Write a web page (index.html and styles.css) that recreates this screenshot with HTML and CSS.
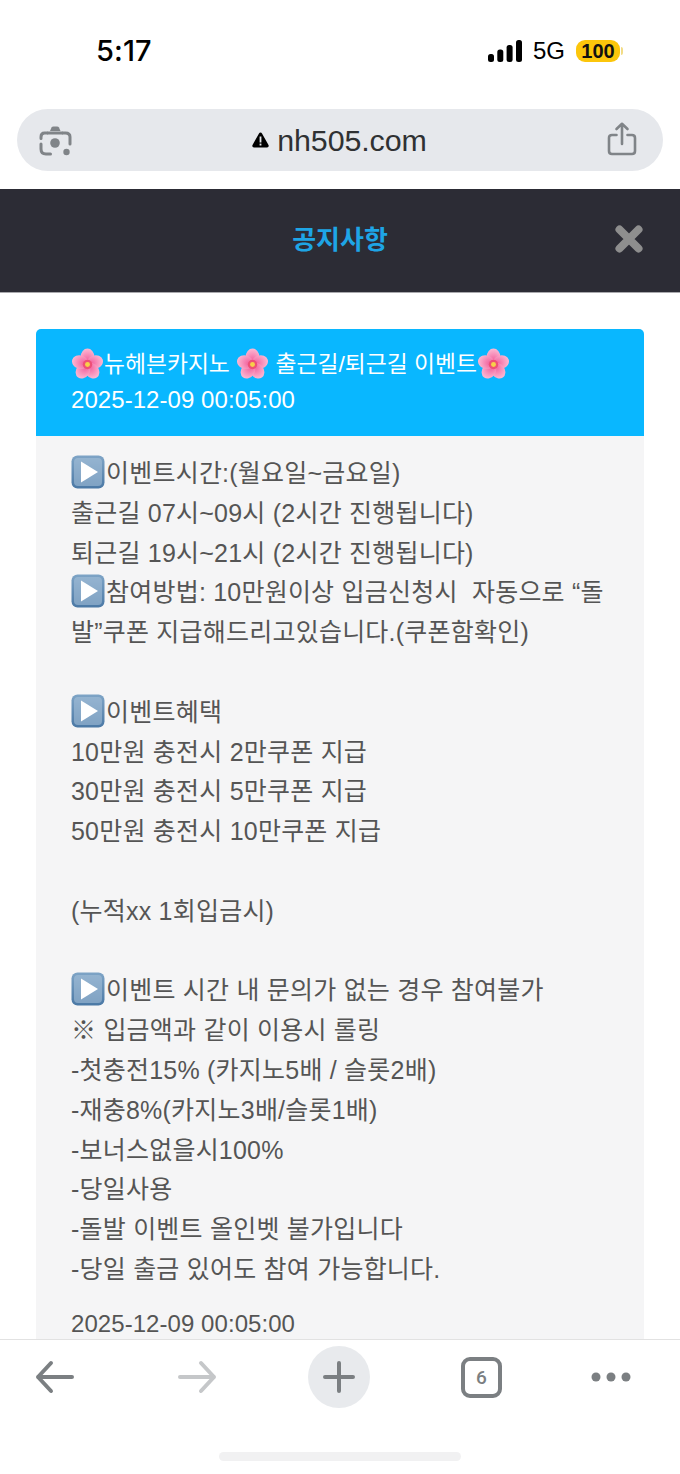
FILE: index.html
```html
<!DOCTYPE html>
<html lang="ko">
<head>
<meta charset="utf-8">
<title>공지사항</title>
<link rel="stylesheet" href="styles.css">
</head>
<body>
<svg class="defs" width="0" height="0" aria-hidden="true">
  <defs>
    <radialGradient id="petal" cx="50%" cy="78%" r="75%">
      <stop offset="0" stop-color="#f25c9a"/>
      <stop offset="1" stop-color="#fbb6d2"/>
    </radialGradient>
    <linearGradient id="blueBox" x1="0" y1="0" x2="0" y2="1">
      <stop offset="0" stop-color="#7ea4c6"/>
      <stop offset="1" stop-color="#4a78a5"/>
    </linearGradient>
    <symbol id="flower" viewBox="0 0 32 32">
      <g fill="url(#petal)">
        <ellipse cx="16" cy="8.5" rx="6.6" ry="8"/>
        <ellipse cx="16" cy="8.5" rx="6.6" ry="8" transform="rotate(72 16 16)"/>
        <ellipse cx="16" cy="8.5" rx="6.6" ry="8" transform="rotate(144 16 16)"/>
        <ellipse cx="16" cy="8.5" rx="6.6" ry="8" transform="rotate(216 16 16)"/>
        <ellipse cx="16" cy="8.5" rx="6.6" ry="8" transform="rotate(288 16 16)"/>
      </g>
      <circle cx="16" cy="16" r="4.6" fill="#ee4f76"/>
      <circle cx="16" cy="16" r="2.4" fill="#f7cf4a"/>
    </symbol>
    <symbol id="play" viewBox="0 0 34 34">
      <rect x="0.5" y="0.5" width="33" height="33" rx="6" fill="url(#blueBox)"/>
      <rect x="3" y="3" width="28" height="28" rx="4" fill="#a9c3da" opacity="0.55"/>
      <path d="M10 6.5 L27 17 L10 27.5 Z" fill="#fff"/>
    </symbol>
  </defs>
</svg>

<div class="phone">
  <header class="status">
    <span class="time">5:17</span>
    <div class="status-right">
      <svg class="signal" width="34" height="22" viewBox="0 0 34 22" aria-hidden="true">
        <rect x="0" y="14" width="6" height="8" rx="2.5"/>
        <rect x="9.3" y="9.5" width="6" height="12.5" rx="2.5"/>
        <rect x="18.6" y="5" width="6" height="17" rx="2.5"/>
        <rect x="28" y="0" width="6" height="22" rx="2.5"/>
      </svg>
      <span class="net">5G</span>
      <span class="battery">100</span>
      <span class="battery-tip"></span>
    </div>
  </header>

  <div class="url-wrap">
    <div class="url-bar">
      <svg class="lens" width="34" height="34" viewBox="0 0 34 34" fill="none" aria-hidden="true">
        <path d="M9 10 H6.5 Q3 10 3 14 V15.5 M3 21 V26 Q3 31 8 31 H12.5 M25 10 H27.5 Q32 10 32 14 V21" stroke="#808488" stroke-width="3" stroke-linecap="round"/>
        <path d="M12 8 L13.5 4.5 Q14 3.5 15.5 3.5 H19 Q20.5 3.5 21 4.5 L22.5 8 Z" fill="#808488"/>
        <path d="M9 10 H25" stroke="#808488" stroke-width="3"/>
        <circle cx="17" cy="20" r="4.8" fill="#808488"/>
        <circle cx="28.5" cy="29" r="3.2" fill="#808488"/>
      </svg>
      <div class="address">
        <svg width="17" height="16" viewBox="0 0 17 16" aria-hidden="true">
          <path d="M8.5 0.5 Q9.5 0.5 10 1.5 L16.5 13 Q17.3 15 15 15.5 H2 Q-0.3 15 0.5 13 L7 1.5 Q7.5 0.5 8.5 0.5 Z" fill="#000"/>
          <rect x="7.6" y="4.5" width="1.8" height="6" fill="#e6e8ec"/>
          <rect x="7.6" y="11.6" width="1.8" height="1.9" fill="#e6e8ec"/>
        </svg>
        <span class="domain">nh505.com</span>
      </div>
      <svg class="share" width="30" height="34" viewBox="0 0 30 34" fill="none" stroke="#808488" stroke-width="2.6" stroke-linecap="round" stroke-linejoin="round" aria-hidden="true">
        <path d="M9.5 13 H5 Q2 13 2 16 V29 Q2 32 5 32 H25 Q28 32 28 29 V16 Q28 13 25 13 H20.5"/>
        <path d="M15 22 V2 M9.5 7 L15 1.8 L20.5 7"/>
      </svg>
    </div>
  </div>

  <div class="modal-head">
    <h1 class="modal-title">공지사항</h1>
    <svg class="close" width="30" height="30" viewBox="0 0 30 30" aria-hidden="true">
      <path d="M5.5 5.5 L24.5 24.5 M24.5 5.5 L5.5 24.5" stroke="#8e8e8e" stroke-width="8" stroke-linecap="round"/>
    </svg>
  </div>

  <main class="content">
    <article class="card">
      <div class="card-head">
        <div class="card-title"><svg class="emoji flower"><use href="#flower"/></svg>뉴헤븐카지노 <svg class="emoji flower"><use href="#flower"/></svg> 출근길/퇴근길 이벤트<svg class="emoji flower"><use href="#flower"/></svg></div>
        <div class="card-date">2025-12-09 00:05:00</div>
      </div>
      <div class="card-body">
        <p class="line"><svg class="emoji play"><use href="#play"/></svg>이벤트시간:(월요일~금요일)</p>
        <p class="line">출근길 07시~09시 (2시간 진행됩니다)</p>
        <p class="line">퇴근길 19시~21시 (2시간 진행됩니다)</p>
        <p class="line"><svg class="emoji play"><use href="#play"/></svg>참여방법: 10만원이상 입금신청시&nbsp; 자동으로 “돌</p>
        <p class="line">발”쿠폰 지급해드리고있습니다.(쿠폰함확인)</p>
        <p class="line">&nbsp;</p>
        <p class="line"><svg class="emoji play"><use href="#play"/></svg>이벤트혜택</p>
        <p class="line">10만원 충전시 2만쿠폰 지급</p>
        <p class="line">30만원 충전시 5만쿠폰 지급</p>
        <p class="line">50만원 충전시 10만쿠폰 지급</p>
        <p class="line">&nbsp;</p>
        <p class="line">(누적xx 1회입금시)</p>
        <p class="line">&nbsp;</p>
        <p class="line"><svg class="emoji play"><use href="#play"/></svg>이벤트 시간 내 문의가 없는 경우 참여불가</p>
        <p class="line">※ 입금액과 같이 이용시 롤링</p>
        <p class="line">-첫충전15% (카지노5배 / 슬롯2배)</p>
        <p class="line">-재충8%(카지노3배/슬롯1배)</p>
        <p class="line">-보너스없을시100%</p>
        <p class="line">-당일사용</p>
        <p class="line">-돌발 이벤트 올인벳 불가입니다</p>
        <p class="line">-당일 출금 있어도 참여 가능합니다.</p>
        <div class="body-date">2025-12-09 00:05:00</div>
      </div>
    </article>
  </main>

  <footer class="toolbar">
    <div class="tools">
      <svg class="tool back" width="40" height="34" viewBox="0 0 40 34" fill="none" stroke="#7b7f82" stroke-width="4" stroke-linecap="round" stroke-linejoin="round" aria-hidden="true">
        <path d="M37 17 H3 M16 3 L3 17 L16 31"/>
      </svg>
      <svg class="tool forward" width="40" height="34" viewBox="0 0 40 34" fill="none" stroke="#c5c7c9" stroke-width="4" stroke-linecap="round" stroke-linejoin="round" aria-hidden="true">
        <path d="M3 17 H37 M24 3 L37 17 L24 31"/>
      </svg>
      <div class="tool plus">
        <svg width="32" height="32" viewBox="0 0 32 32" stroke="#7b7f82" stroke-width="4" stroke-linecap="round" aria-hidden="true">
          <path d="M16 2 V30 M2 16 H30"/>
        </svg>
      </div>
      <div class="tool tabs">6</div>
      <svg class="tool more" width="40" height="10" viewBox="0 0 40 10" fill="#7b7f82" aria-hidden="true">
        <circle cx="5" cy="5" r="4.5"/><circle cx="20" cy="5" r="4.5"/><circle cx="35" cy="5" r="4.5"/>
      </svg>
    </div>
    <div class="home-indicator"></div>
  </footer>
</div>
</body>
</html>
```
FILE: styles.css
```css
* { box-sizing: border-box; }
html, body { margin: 0; padding: 0; height: 100%; background: #fff; }
body {
  font-family: "Liberation Sans", "Noto Sans CJK KR", sans-serif;
  overflow: hidden;
}
.defs { position: absolute; }
.phone {
  width: 680px;
  height: 1474px;
  display: flex;
  flex-direction: column;
  overflow: hidden;
}

.status {
  height: 109px;
  flex: none;
  padding: 30px 57px 0 96px;
  display: flex;
  justify-content: space-between;
  align-items: flex-start;
}
.time {
  font-family: Inter, "Liberation Sans", sans-serif;
  font-size: 29px;
  font-weight: 500;
  line-height: 42px;
  color: #000;
  letter-spacing: 0.1px;
}
.status-right { display: flex; align-items: center; height: 42px; }
.signal { fill: #000; margin-right: 11px; }
.net { font-size: 24px; color: #000; margin-right: 11px; }
.battery {
  background: #fcc60b;
  border-radius: 9px;
  width: 44px;
  height: 22px;
  font-size: 20px;
  font-weight: 700;
  line-height: 22px;
  text-align: center;
  color: #111;
}
.battery-tip { width: 2px; height: 8px; background: #f2dc86; border-radius: 0 2px 2px 0; margin-left: 1px; }

.url-wrap { flex: none; height: 80px; padding: 0 17px; }
.url-bar {
  height: 62px;
  border-radius: 31px;
  background: #e6e8ec;
  display: flex;
  align-items: center;
  justify-content: space-between;
  padding: 0 26px 0 21px;
}
.lens { flex: none; }
.address { display: flex; align-items: center; gap: 8px; margin-left: 0; }
.domain { font-size: 30.4px; color: #2f3133; letter-spacing: -0.1px; }
.share { flex: none; margin-top: -2px; }

.modal-head {
  flex: none;
  height: 104px;
  background: #2c2c35;
  border-bottom: 1px solid #a9a9ad;
  display: flex;
  align-items: center;
  justify-content: center;
  position: relative;
}
.modal-title {
  margin: -2px 0 0;
  font-size: 26px;
  font-weight: 700;
  color: #1ea5e6;
  line-height: 30px;
}
.close { position: absolute; right: 36px; top: 35px; }

.content { flex: 1 1 0; min-height: 0; overflow: hidden; padding: 36px 36px 0; }
.card { border-radius: 5px 5px 0 0; overflow: hidden; background: #f5f5f6; }
.card-head {
  background: #09b7ff;
  height: 107px;
  padding: 15px 35px 0;
  color: #fff;
  font-size: 24px;
}
.card-title {
  height: 40px;
  line-height: 40px;
  font-size: 22.8px;
  display: flex;
  align-items: center;
  white-space: pre;
}
.card-date { line-height: 32px; letter-spacing: 0.06px; }
.emoji { flex: none; vertical-align: -7px; }
.flower { width: 33px; height: 33px; }
.play { width: 34px; height: 34px; margin-right: 1px; }

.card-body { padding: 18px 35px 0; color: #555; font-size: 25px; }
.line {
  margin: 0;
  height: 39.8px;
  line-height: 39.8px;
  white-space: pre;
  letter-spacing: 0.22px;
}
.body-date { margin-top: 14px; height: 40px; line-height: 40px; font-size: 24px; letter-spacing: 0.06px; }

.toolbar {
  flex: none;
  height: 135px;
  background: #fff;
  border-top: 1px solid #e2e2e2;
  display: flex;
  flex-direction: column;
  align-items: center;
}
.tools {
  width: 100%;
  height: 74px;
  display: flex;
  align-items: center;
  gap: 91px;
  padding-left: 35px;
}
.tool { flex: none; }
.back { margin-right: 12px; }
.forward { margin-left: -1px; }
.plus {
  width: 62px;
  height: 62px;
  border-radius: 50%;
  background: #e8eaed;
  display: flex;
  align-items: center;
  justify-content: center;
}
.tabs {
  width: 41px;
  height: 41px;
  border: 4px solid #7b7f82;
  border-radius: 9px;
  color: #7b7f82;
  font-family: Roboto, "Liberation Sans", sans-serif;
  font-size: 19px;
  font-weight: 500;
  line-height: 33px;
  text-align: center;
}
.more { margin-left: -2px; }
.home-indicator {
  width: 242px;
  height: 9px;
  border-radius: 5px;
  background: #f1f1f2;
  margin-top: 38px;
}
```
